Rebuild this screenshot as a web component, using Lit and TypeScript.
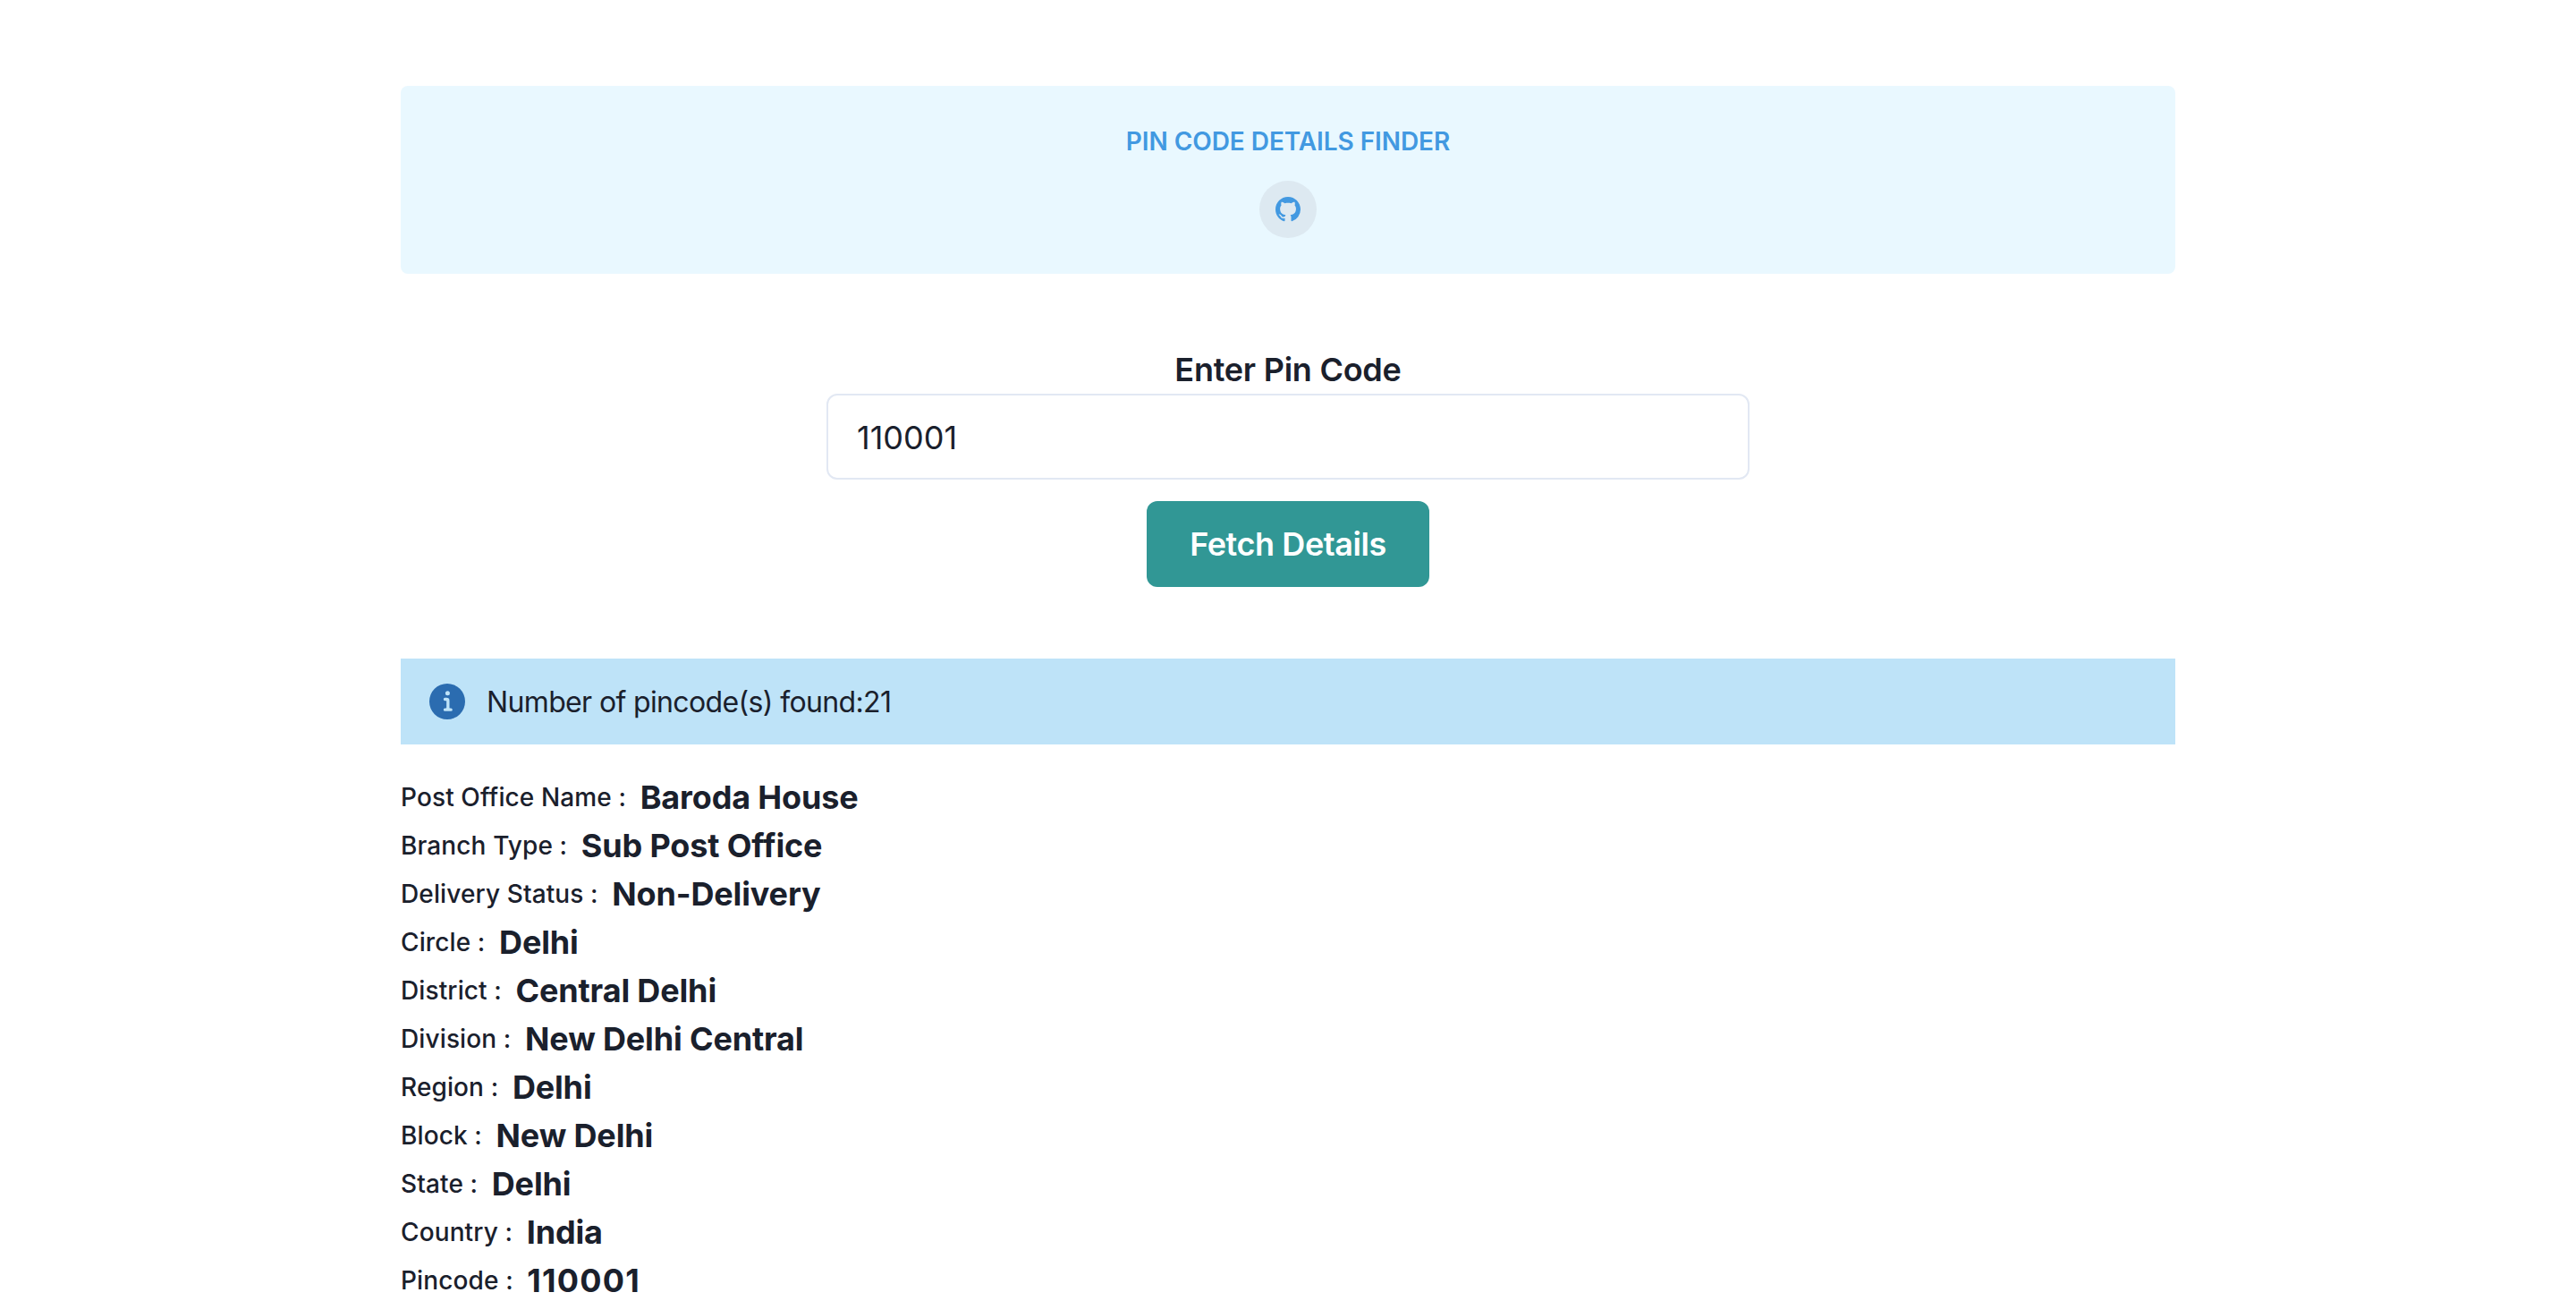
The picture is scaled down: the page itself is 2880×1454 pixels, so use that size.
import { LitElement, html, css } from "lit";
import { customElement } from "lit/decorators.js";
import { classMap } from "lit/directives/class-map.js";

const rows: [string, string][] = [
  ["Post Office Name", "Baroda House"],
  ["Branch Type", "Sub Post Office"],
  ["Delivery Status", "Non-Delivery"],
  ["Circle", "Delhi"],
  ["District", "Central Delhi"],
  ["Division", "New Delhi Central"],
  ["Region", "Delhi"],
  ["Block", "New Delhi"],
  ["State", "Delhi"],
  ["Country", "India"],
  ["Pincode", "110001"],
];

@customElement("app-root")
export class AppRoot extends LitElement {
  static styles = css`
    :host { display: block; font-family: Inter, "Noto Sans", sans-serif; color: #1a202c; height: 1454px; overflow: hidden; }
    .wrap { width: 1984px; margin: 0 auto; padding-top: 96px; }
    .header { background: #e9f8ff; border-radius: 8px; height: 210px; box-sizing: border-box; padding-top: 44px; display: flex; flex-direction: column; align-items: center; }
    .title { font-size: 28px; line-height: 36px; font-weight: 560; letter-spacing: -0.06px; color: #4299e1; }
    .gh { margin-top: 26px; width: 64px; height: 64px; border-radius: 50%; background: #dde9f1; display: flex; align-items: center; justify-content: center; color: #4299e1; }
    .gh svg { width: 28px; height: 28px; }
    .form { margin-top: 84px; display: flex; flex-direction: column; align-items: center; }
    .label { font-size: 36px; line-height: 46px; margin-bottom: 4px; font-weight: 600; letter-spacing: -0.25px; }
    .input { width: 1032px; height: 96px; box-sizing: border-box; border: 2px solid #e2e8f3; border-radius: 12px; padding: 2px 32px 0; font-size: 36px; display: flex; align-items: center; background: #fff; }
    .btn { margin-top: 24px; width: 316px; height: 96px; border-radius: 12px; background: #319795; color: #fff; font-size: 36px; font-weight: 600; letter-spacing: -0.42px; display: flex; align-items: center; justify-content: center; }
    .alert { margin-top: 80px; height: 96px; background: #bee3f8; display: flex; align-items: center; padding: 0 32px; font-size: 32px; letter-spacing: -0.64px; }
    .alert svg { width: 40px; height: 40px; margin-right: 24px; color: #2b6cb0; }
    .list { margin-top: 32px; }
    .row { height: 54px; display: flex; align-items: center; }
    .k { font-size: 28px; font-weight: 540; margin-right: 8px; white-space: pre; letter-spacing: 0.12px; }
    .v { font-size: 36px; font-weight: 740; letter-spacing: -0.15px; }
    .v.num { letter-spacing: 1.2px; }
  `;
  render() {
    return html`<div class="wrap">
      <div class="header">
        <div class="title">PIN CODE DETAILS FINDER</div>
        <div class="gh"><svg viewBox="0 0 16 16" fill="currentColor"><path d="M8 0C3.58 0 0 3.58 0 8c0 3.54 2.29 6.53 5.47 7.59.4.07.55-.17.55-.38 0-.19-.01-.82-.01-1.49-2.01.37-2.53-.49-2.69-.94-.09-.23-.48-.94-.82-1.13-.28-.15-.68-.52-.01-.53.63-.01 1.08.58 1.23.82.72 1.21 1.87.87 2.33.66.07-.52.28-.87.51-1.07-1.78-.2-3.64-.89-3.64-3.95 0-.87.31-1.59.82-2.15-.08-.2-.36-1.02.08-2.12 0 0 .67-.21 2.2.82.64-.18 1.32-.27 2-.27s1.36.09 2 .27c1.53-1.04 2.2-.82 2.2-.82.44 1.1.16 1.92.08 2.12.51.56.82 1.27.82 2.15 0 3.07-1.87 3.75-3.65 3.95.29.25.54.73.54 1.48 0 1.07-.01 1.93-.01 2.2 0 .21.15.46.55.38A8.013 8.013 0 0 0 16 8c0-4.42-3.58-8-8-8z"/></svg></div>
      </div>
      <div class="form">
        <div class="label">Enter Pin Code</div>
        <div class="input">110001</div>
        <div class="btn">Fetch Details</div>
      </div>
      <div class="alert"><svg viewBox="0 0 24 24" fill="currentColor"><path d="M12 0a12 12 0 1 0 12 12A12 12 0 0 0 12 0Zm.25 5a1.5 1.5 0 1 1-1.5 1.5 1.5 1.5 0 0 1 1.5-1.5Zm2.25 13.5h-4a1 1 0 0 1 0-2h.75a.25.25 0 0 0 .25-.25v-4.5a.25.25 0 0 0-.25-.25h-.75a1 1 0 0 1 0-2h1a2 2 0 0 1 2 2v4.75a.25.25 0 0 0 .25.25h.75a1 1 0 1 1 0 2Z"/></svg>Number of pincode(s) found:21</div>
      <div class="list">${rows.map(([k, v]) => html`<div class="row"><span class="k">${k} : </span><span class=${classMap({ v: true, num: /^\d+$/.test(v) })}>${v}</span></div>`)}</div>
    </div>`;
  }
}
